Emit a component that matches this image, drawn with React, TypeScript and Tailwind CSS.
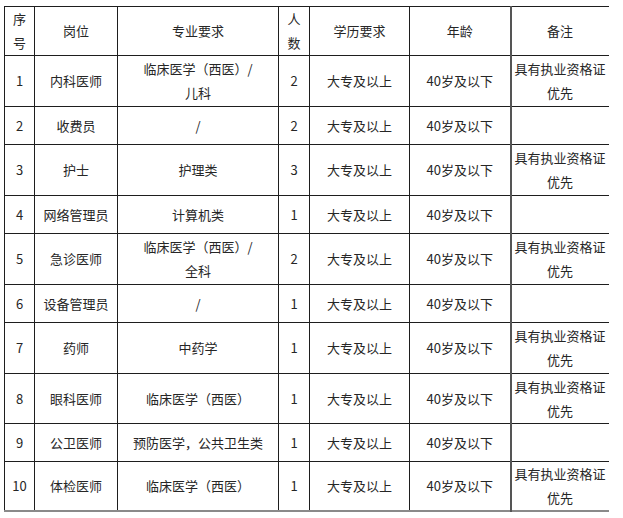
import React from "react";

type Row = {
  n: string;
  pos: string;
  major: React.ReactNode;
  cnt: string;
  edu: string;
  age: string;
  note: boolean;
  h: string;
};

const rows: Row[] = [
  { n: "1", pos: "内科医师", major: <>临床医学（西医）/<br />儿科</>, cnt: "2", edu: "大专及以上", age: "40岁及以下", note: true, h: "h-[51px]" },
  { n: "2", pos: "收费员", major: "/", cnt: "2", edu: "大专及以上", age: "40岁及以下", note: false, h: "h-[38px]" },
  { n: "3", pos: "护士", major: "护理类", cnt: "3", edu: "大专及以上", age: "40岁及以下", note: true, h: "h-[51px]" },
  { n: "4", pos: "网络管理员", major: "计算机类", cnt: "1", edu: "大专及以上", age: "40岁及以下", note: false, h: "h-[38px]" },
  { n: "5", pos: "急诊医师", major: <>临床医学（西医）/<br />全科</>, cnt: "2", edu: "大专及以上", age: "40岁及以下", note: true, h: "h-[51px]" },
  { n: "6", pos: "设备管理员", major: "/", cnt: "1", edu: "大专及以上", age: "40岁及以下", note: false, h: "h-[38px]" },
  { n: "7", pos: "药师", major: "中药学", cnt: "1", edu: "大专及以上", age: "40岁及以下", note: true, h: "h-[51px]" },
  { n: "8", pos: "眼科医师", major: "临床医学（西医）", cnt: "1", edu: "大专及以上", age: "40岁及以下", note: true, h: "h-[50px]" },
  { n: "9", pos: "公卫医师", major: "预防医学，公共卫生类", cnt: "1", edu: "大专及以上", age: "40岁及以下", note: false, h: "h-[38px]" },
  { n: "10", pos: "体检医师", major: "临床医学（西医）", cnt: "1", edu: "大专及以上", age: "40岁及以下", note: true, h: "h-[49px]" },
];

const td = "border border-[#1e1e1e] text-center align-middle p-0 leading-[24px]";
const tdLast = "border-l-2 border-l-[#555] border-t border-b border-r-0 border-t-[#1e1e1e] border-b-[#1e1e1e] text-center align-middle p-0 leading-[24px]";

export default function App() {
  return (
    <div
      className="bg-white w-[623px] h-[518px] overflow-hidden pl-[4px] pt-[6px] text-[13px] text-[#262626]"
      style={{ fontFamily: '"Noto Sans CJK SC", "Noto Sans", sans-serif' }}
    >
      <table className="border-collapse table-fixed w-[604px] border-b-2 border-b-[#8a8a8a]">
        <colgroup>
          <col className="w-[30px]" />
          <col className="w-[83px]" />
          <col className="w-[161px]" />
          <col className="w-[31px]" />
          <col className="w-[100px]" />
          <col className="w-[101px]" />
          <col className="w-[98px]" />
        </colgroup>
        <tbody>
          <tr className="h-[49px]">
            <td className={td}>序<br />号</td>
            <td className={td}>岗位</td>
            <td className={td}>专业要求</td>
            <td className={td}>人<br />数</td>
            <td className={td}>学历要求</td>
            <td className={td}>年龄</td>
            <td className={tdLast}>备注</td>
          </tr>
          {rows.map((r) => (
            <tr key={r.n} className={r.h}>
              <td className={td}>{r.n}</td>
              <td className={td}>{r.pos}</td>
              <td className={td}>{r.major}</td>
              <td className={td}>{r.cnt}</td>
              <td className={td}>{r.edu}</td>
              <td className={td}>{r.age}</td>
              <td className={tdLast}>
                {r.note ? <>具有执业资格证<br />优先</> : null}
              </td>
            </tr>
          ))}
        </tbody>
      </table>
    </div>
  );
}
